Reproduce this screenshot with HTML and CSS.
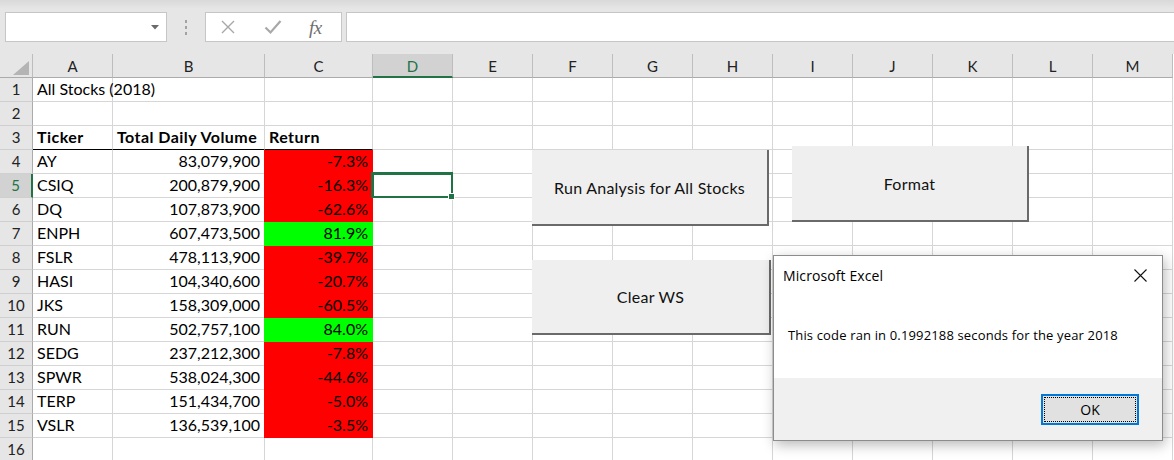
FILE: index.html
```html
<!DOCTYPE html>
<html>
<head>
<meta charset="utf-8">
<link rel="stylesheet" href="styles.css">
</head>
<body>
<div class="page">
  <div class="toolbar">
    <div class="namebox"><svg class="caret" width="8" height="5" viewBox="0 0 8 5"><path d="M0 0h8L4 4.5z" fill="#6a6a6a"/></svg></div>
    <div class="grip"><span></span><span></span><span></span></div>
    <div class="fxbox">
      <svg class="ico" width="16" height="16" viewBox="0 0 16 16"><path d="M2 2L14 14M14 2L2 14" stroke="#a8a8a8" stroke-width="1.4" fill="none"/></svg>
      <svg class="ico" width="18" height="16" viewBox="0 0 18 16"><path d="M1.5 8.5L6.5 13.5L16.5 2" stroke="#a8a8a8" stroke-width="2.2" fill="none"/></svg>
      <span class="fx">fx</span>
    </div>
    <div class="formula"></div>
  </div>

  <div class="sheet">
    <div class="row hdr">
      <div class="c h corner"><svg width="16" height="14" viewBox="0 0 16 14"><path d="M16 0V14H0z" fill="#b4b4b4"/></svg></div>
      <div class="c a">A</div><div class="c b">B</div><div class="c cc">C</div><div class="c sel">D</div><div class="c">E</div><div class="c">F</div><div class="c">G</div><div class="c">H</div><div class="c">I</div><div class="c">J</div><div class="c">K</div><div class="c">L</div><div class="c">M</div>
    </div>
    <div class="row">
      <div class="c h">1</div><div class="c a t">All Stocks (2018)</div><div class="c b"></div><div class="c cc"></div><div class="c"></div><div class="c"></div><div class="c"></div><div class="c"></div><div class="c"></div><div class="c"></div><div class="c"></div><div class="c"></div><div class="c"></div><div class="c"></div>
    </div>
    <div class="row">
      <div class="c h">2</div><div class="c a"></div><div class="c b"></div><div class="c cc"></div><div class="c"></div><div class="c"></div><div class="c"></div><div class="c"></div><div class="c"></div><div class="c"></div><div class="c"></div><div class="c"></div><div class="c"></div><div class="c"></div>
    </div>
    <div class="row">
      <div class="c h">3</div><div class="c a t bold line">Ticker</div><div class="c b t bold line">Total Daily Volume</div><div class="c cc t bold line">Return</div><div class="c"></div><div class="c"></div><div class="c"></div><div class="c"></div><div class="c"></div><div class="c"></div><div class="c"></div><div class="c"></div><div class="c"></div><div class="c"></div>
    </div>
    <div class="row">
      <div class="c h">4</div><div class="c a t">AY</div><div class="c b n">83,079,900</div><div class="c cc n red">-7.3%</div><div class="c"></div><div class="c"></div><div class="c"></div><div class="c"></div><div class="c"></div><div class="c"></div><div class="c"></div><div class="c"></div><div class="c"></div><div class="c"></div>
    </div>
    <div class="row">
      <div class="c h hsel">5</div><div class="c a t">CSIQ</div><div class="c b n">200,879,900</div><div class="c cc n red">-16.3%</div><div class="c active"><span class="handle"></span></div><div class="c"></div><div class="c"></div><div class="c"></div><div class="c"></div><div class="c"></div><div class="c"></div><div class="c"></div><div class="c"></div><div class="c"></div>
    </div>
    <div class="row">
      <div class="c h">6</div><div class="c a t">DQ</div><div class="c b n">107,873,900</div><div class="c cc n red">-62.6%</div><div class="c"></div><div class="c"></div><div class="c"></div><div class="c"></div><div class="c"></div><div class="c"></div><div class="c"></div><div class="c"></div><div class="c"></div><div class="c"></div>
    </div>
    <div class="row">
      <div class="c h">7</div><div class="c a t">ENPH</div><div class="c b n">607,473,500</div><div class="c cc n green">81.9%</div><div class="c"></div><div class="c"></div><div class="c"></div><div class="c"></div><div class="c"></div><div class="c"></div><div class="c"></div><div class="c"></div><div class="c"></div><div class="c"></div>
    </div>
    <div class="row">
      <div class="c h">8</div><div class="c a t">FSLR</div><div class="c b n">478,113,900</div><div class="c cc n red">-39.7%</div><div class="c"></div><div class="c"></div><div class="c"></div><div class="c"></div><div class="c"></div><div class="c"></div><div class="c"></div><div class="c"></div><div class="c"></div><div class="c"></div>
    </div>
    <div class="row">
      <div class="c h">9</div><div class="c a t">HASI</div><div class="c b n">104,340,600</div><div class="c cc n red">-20.7%</div><div class="c"></div><div class="c"></div><div class="c"></div><div class="c"></div><div class="c"></div><div class="c"></div><div class="c"></div><div class="c"></div><div class="c"></div><div class="c"></div>
    </div>
    <div class="row">
      <div class="c h">10</div><div class="c a t">JKS</div><div class="c b n">158,309,000</div><div class="c cc n red">-60.5%</div><div class="c"></div><div class="c"></div><div class="c"></div><div class="c"></div><div class="c"></div><div class="c"></div><div class="c"></div><div class="c"></div><div class="c"></div><div class="c"></div>
    </div>
    <div class="row">
      <div class="c h">11</div><div class="c a t">RUN</div><div class="c b n">502,757,100</div><div class="c cc n green">84.0%</div><div class="c"></div><div class="c"></div><div class="c"></div><div class="c"></div><div class="c"></div><div class="c"></div><div class="c"></div><div class="c"></div><div class="c"></div><div class="c"></div>
    </div>
    <div class="row">
      <div class="c h">12</div><div class="c a t">SEDG</div><div class="c b n">237,212,300</div><div class="c cc n red">-7.8%</div><div class="c"></div><div class="c"></div><div class="c"></div><div class="c"></div><div class="c"></div><div class="c"></div><div class="c"></div><div class="c"></div><div class="c"></div><div class="c"></div>
    </div>
    <div class="row">
      <div class="c h">13</div><div class="c a t">SPWR</div><div class="c b n">538,024,300</div><div class="c cc n red">-44.6%</div><div class="c"></div><div class="c"></div><div class="c"></div><div class="c"></div><div class="c"></div><div class="c"></div><div class="c"></div><div class="c"></div><div class="c"></div><div class="c"></div>
    </div>
    <div class="row">
      <div class="c h">14</div><div class="c a t">TERP</div><div class="c b n">151,434,700</div><div class="c cc n red">-5.0%</div><div class="c"></div><div class="c"></div><div class="c"></div><div class="c"></div><div class="c"></div><div class="c"></div><div class="c"></div><div class="c"></div><div class="c"></div><div class="c"></div>
    </div>
    <div class="row">
      <div class="c h">15</div><div class="c a t">VSLR</div><div class="c b n">136,539,100</div><div class="c cc n red">-3.5%</div><div class="c"></div><div class="c"></div><div class="c"></div><div class="c"></div><div class="c"></div><div class="c"></div><div class="c"></div><div class="c"></div><div class="c"></div><div class="c"></div>
    </div>
    <div class="row">
      <div class="c h">16</div><div class="c a"></div><div class="c b"></div><div class="c cc"></div><div class="c"></div><div class="c"></div><div class="c"></div><div class="c"></div><div class="c"></div><div class="c"></div><div class="c"></div><div class="c"></div><div class="c"></div><div class="c"></div>
    </div>
  </div>

  <div class="xbtn btn-run">Run Analysis for All Stocks</div>
  <div class="xbtn btn-format">Format</div>
  <div class="xbtn btn-clear">Clear WS</div>

  <div class="dialog">
    <div class="dlg-title">
      <span>Microsoft Excel</span>
      <svg class="close" width="13" height="13" viewBox="0 0 13 13"><path d="M0.5 0.5L12.5 12.5M12.5 0.5L0.5 12.5" stroke="#111" stroke-width="1.1" fill="none"/></svg>
    </div>
    <div class="dlg-msg">This code ran in 0.1992188 seconds for the year 2018</div>
    <div class="dlg-foot"><div class="ok"><span>OK</span></div></div>
  </div>
</div>
</body>
</html>
```

FILE: styles.css
```css
html, body { margin: 0; padding: 0; }
body { width: 1174px; height: 460px; overflow: hidden; background: #ffffff; font-family: "Lato", "Liberation Sans", sans-serif; }
.page { position: relative; width: 1174px; height: 460px; overflow: hidden; }

.toolbar {
  height: 54px; box-sizing: border-box; padding-top: 12px;
  display: flex; align-items: flex-start;
  background: linear-gradient(#d9d9d9 0px, #e6e6e6 9px, #e6e6e6 100%);
}
.namebox {
  margin-left: 5px; width: 162px; height: 30px; box-sizing: border-box;
  background: #fff; border: 1px solid #c6c6c6; position: relative;
  display: flex; align-items: center; justify-content: flex-end; padding-right: 7px;
}
.grip { width: 38px; height: 30px; display: flex; flex-direction: column; align-items: center; justify-content: center; gap: 3px; }
.grip span { width: 2px; height: 3px; background: #a2a2a2; display: block; }
.fxbox {
  width: 137px; height: 30px; box-sizing: border-box; background: #fff; border: 1px solid #c6c6c6;
  display: flex; align-items: center; padding-left: 14px;
}
.fxbox .ico { display: block; }
.fxbox .ico:first-child { margin-right: 28px; }
.fxbox .fx { margin-left: 27px; font-family: "Liberation Serif", serif; font-style: italic; font-size: 19px; color: #6e6e6e; letter-spacing: -0.5px; line-height: 1; }
.formula { margin-left: 4px; flex: 1; height: 30px; box-sizing: border-box; background: #fff; border: 1px solid #c6c6c6; border-right: none; }

.sheet { display: flex; flex-direction: column; }
.row { display: flex; height: 24px; }
.c {
  flex: none; box-sizing: border-box; width: 80px; height: 24px;
  border-right: 1px solid #d6d6d6; border-bottom: 1px solid #d6d6d6;
  font-size: 16px; line-height: 22px; color: #000; white-space: nowrap;
}
.c.a { width: 80px; }
.c.b { width: 152px; }
.c.cc { width: 108px; }
.c.h { width: 33px; background: #e6e6e6; text-align: center; color: #222; border-right-color: #ababab; border-bottom-color: #d0d0d0; font-size: 15px; }
.hdr .c { background: #e6e6e6; text-align: center; color: #222; border-right-color: #bdbdbd; border-bottom-color: #ababab; line-height: 24px; font-size: 15px; }
.hdr .corner { display: flex; align-items: flex-end; justify-content: flex-end; padding: 0 3px 2px 0; }
.hdr .c.sel { background: #d2d2d2; color: #217346; border-bottom: 2px solid #217346; }
.c.h.hsel { background: #d2d2d2; color: #217346; border-right: 2px solid #217346; }

.c.t { padding-left: 4px; overflow: visible; position: relative; z-index: 1; }
.c.n { text-align: right; padding-right: 4px; }
.bold { font-weight: 700; letter-spacing: 0.45px; }
.c.line { border-bottom-color: #000; }
.c.red { background: #ff0000; border-color: #ff0000; box-shadow: -1px 0 0 #ff0000; }
.c.green { background: #00ff00; border-color: #00ff00; box-shadow: -1px 0 0 #00ff00; }
.c.active { position: relative; box-shadow: 0 0 0 1px #217346 inset, -1px -1px 0 1px #217346; border-color: #217346; }
.handle { position: absolute; right: -3px; bottom: -3px; width: 5px; height: 5px; background: #217346; border: 1px solid #fff; }

.xbtn {
  position: absolute; box-sizing: border-box; background: #efefef;
  border-right: 2px solid #6a6a6a; border-bottom: 2px solid #6a6a6a;
  display: flex; align-items: center; justify-content: center;
  font-size: 16px; letter-spacing: 0.25px; color: #111; z-index: 3;
}
.btn-run { left: 532px; top: 150px; width: 237px; height: 76px; }
.btn-format { left: 792px; top: 146px; width: 237px; height: 76px; }
.btn-clear { left: 532px; top: 260px; width: 239px; height: 75px; }

.dialog {
  position: absolute; left: 773px; top: 255px; width: 390px; height: 186px; box-sizing: border-box;
  background: #fff; border: 1px solid #8c8c8c; z-index: 5;
  box-shadow: 2px 4px 12px rgba(0,0,0,0.28);
  display: flex; flex-direction: column;
  font-family: "Open Sans", "Noto Sans", sans-serif; color: #000;
}
.dlg-title { height: 38px; display: flex; align-items: center; justify-content: space-between; padding: 0 15px 0 9px; font-size: 14px; letter-spacing: 0.1px; }
.close { display: block; }
.dlg-msg { flex: 1; padding: 32px 0 0 14px; font-size: 13px; letter-spacing: 0.15px; }
.dlg-foot { height: 62px; background: #f0f0f0; display: flex; justify-content: flex-end; align-items: flex-start; padding: 16px 23px 0 0; box-sizing: border-box; }
.ok { width: 98px; height: 31px; box-sizing: border-box; border: 2px solid #0078d7; background: #e1e1e1; padding: 1px; }
.ok span { display: flex; align-items: center; justify-content: center; height: 100%; box-sizing: border-box; border: 1px dotted #000; font-size: 14px; }
```
